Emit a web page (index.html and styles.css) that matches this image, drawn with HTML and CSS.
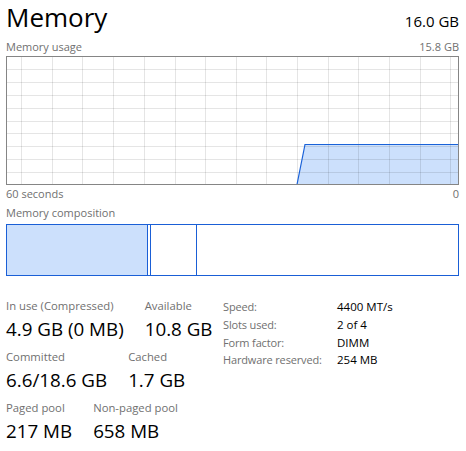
FILE: index.html
```html
<!DOCTYPE html>
<html>
<head>
<meta charset="utf-8">
<link rel="stylesheet" href="styles.css">
</head>
<body>
<div class="page">
  <div class="header">
    <div class="title">Memory</div>
    <div class="total">16.0 GB</div>
  </div>
  <div class="subhead">
    <span>Memory usage</span>
    <span>15.8 GB</span>
  </div>
  <svg class="graph" width="453" height="129" viewBox="0 0 453 129">
    <polygon class="area" points="291,128 299,88.5 452,88.5 452,128"/>
    <g class="grid">
      <line x1="15.5" y1="0" x2="15.5" y2="129"/>
      <line x1="46.5" y1="0" x2="46.5" y2="129"/>
      <line x1="76.5" y1="0" x2="76.5" y2="129"/>
      <line x1="107.5" y1="0" x2="107.5" y2="129"/>
      <line x1="138.5" y1="0" x2="138.5" y2="129"/>
      <line x1="169.5" y1="0" x2="169.5" y2="129"/>
      <line x1="199.5" y1="0" x2="199.5" y2="129"/>
      <line x1="230.5" y1="0" x2="230.5" y2="129"/>
      <line x1="260.5" y1="0" x2="260.5" y2="129"/>
      <line x1="291.5" y1="0" x2="291.5" y2="129"/>
      <line x1="322.5" y1="0" x2="322.5" y2="129"/>
      <line x1="352.5" y1="0" x2="352.5" y2="129"/>
      <line x1="383.5" y1="0" x2="383.5" y2="129"/>
      <line x1="414.5" y1="0" x2="414.5" y2="129"/>
      <line x1="444.5" y1="0" x2="444.5" y2="129"/>
      <line x1="0" y1="13.5" x2="453" y2="13.5"/>
      <line x1="0" y1="26.5" x2="453" y2="26.5"/>
      <line x1="0" y1="39.5" x2="453" y2="39.5"/>
      <line x1="0" y1="52.5" x2="453" y2="52.5"/>
      <line x1="0" y1="65.5" x2="453" y2="65.5"/>
      <line x1="0" y1="77.5" x2="453" y2="77.5"/>
      <line x1="0" y1="90.5" x2="453" y2="90.5"/>
      <line x1="0" y1="103.5" x2="453" y2="103.5"/>
      <line x1="0" y1="116.5" x2="453" y2="116.5"/>
    </g>
    <polyline class="trace" points="291,128.5 299,88.5 452,88.5"/>
    <rect class="frame" x="0.5" y="0.5" width="452" height="128"/>
  </svg>
  <div class="axis">
    <span>60 seconds</span>
    <span>0</span>
  </div>
  <div class="subhead comp-title">
    <span>Memory composition</span>
  </div>
  <div class="composition">
    <div class="seg seg-inuse" style="width:140px"></div>
    <div class="seg" style="width:2px"></div>
    <div class="seg" style="width:45px"></div>
    <div class="seg seg-free"></div>
  </div>
  <div class="stats">
    <div class="left">
      <div class="row">
        <div class="stat">
          <div class="label">In use (Compressed)</div>
          <div class="value">4.9 GB (0 MB)</div>
        </div>
        <div class="stat">
          <div class="label">Available</div>
          <div class="value">10.8 GB</div>
        </div>
      </div>
      <div class="row">
        <div class="stat">
          <div class="label">Committed</div>
          <div class="value">6.6/18.6 GB</div>
        </div>
        <div class="stat">
          <div class="label">Cached</div>
          <div class="value">1.7 GB</div>
        </div>
      </div>
      <div class="row">
        <div class="stat">
          <div class="label">Paged pool</div>
          <div class="value">217 MB</div>
        </div>
        <div class="stat">
          <div class="label">Non-paged pool</div>
          <div class="value">658 MB</div>
        </div>
      </div>
    </div>
    <div class="right">
      <div class="prop"><span class="pk">Speed:</span><span class="pv">4400 MT/s</span></div>
      <div class="prop"><span class="pk">Slots used:</span><span class="pv">2 of 4</span></div>
      <div class="prop"><span class="pk">Form factor:</span><span class="pv">DIMM</span></div>
      <div class="prop"><span class="pk">Hardware reserved:</span><span class="pv">254 MB</span></div>
    </div>
  </div>
</div>
</body>
</html>
```

FILE: styles.css
```css
html, body {
  margin: 0;
  padding: 0;
  background: #ffffff;
}
body {
  font-family: "Open Sans", "Noto Sans", sans-serif;
  color: #000000;
}
.page {
  width: 466px;
  height: 451px;
  box-sizing: border-box;
  padding: 0 7px 0 6px;
  overflow: hidden;
}
.header {
  display: flex;
  justify-content: space-between;
  align-items: baseline;
  height: 34px;
}
.title {
  font-size: 26px;
  line-height: 34px;
  font-weight: 400;
}
.total {
  font-size: 15px;
  line-height: 34px;
}
.subhead, .axis {
  display: flex;
  justify-content: space-between;
  font-size: 11px;
  line-height: 15px;
  color: #707070;
}
.subhead {
  margin-top: 5px;
}
.graph {
  display: block;
  margin-top: 2px;
}
.graph .area {
  fill: #cce0fc;
}
.graph .grid line {
  stroke: rgba(0, 0, 0, 0.1);
  stroke-width: 1;
}
.graph .trace {
  fill: none;
  stroke: #1a62d8;
  stroke-width: 1.2;
}
.graph .frame {
  fill: none;
  stroke: #858585;
  stroke-width: 1;
}
.axis {
  margin-top: 1px;
}
.comp-title {
  margin-top: 4px;
}
.composition {
  margin-top: 4px;
  display: flex;
  height: 52px;
  box-sizing: border-box;
  border: 1px solid #1a5fd6;
}
.seg {
  flex: none;
  border-right: 1px solid #1a5fd6;
}
.seg-inuse {
  background: #cce0fc;
}
.seg-free {
  flex: 1;
  border-right: none;
}
.stats {
  display: flex;
  margin-top: 22px;
}
.left {
  width: 217px;
  display: flex;
  flex-direction: column;
  gap: 8px;
}
.row {
  display: flex;
  gap: 21px;
}
.label {
  font-size: 11.3px;
  line-height: 16px;
  color: #707070;
  white-space: nowrap;
}
.value {
  margin-top: 4px;
  font-size: 18.8px;
  line-height: 23px;
  white-space: nowrap;
}
.right {
  display: flex;
  flex-direction: column;
}
.prop {
  display: flex;
  font-size: 11px;
  line-height: 17.8px;
  white-space: nowrap;
}
.pk {
  width: 114px;
  color: #707070;
  letter-spacing: -0.15px;
}
.pv {
  color: #000000;
  font-size: 11.5px;
}
```
